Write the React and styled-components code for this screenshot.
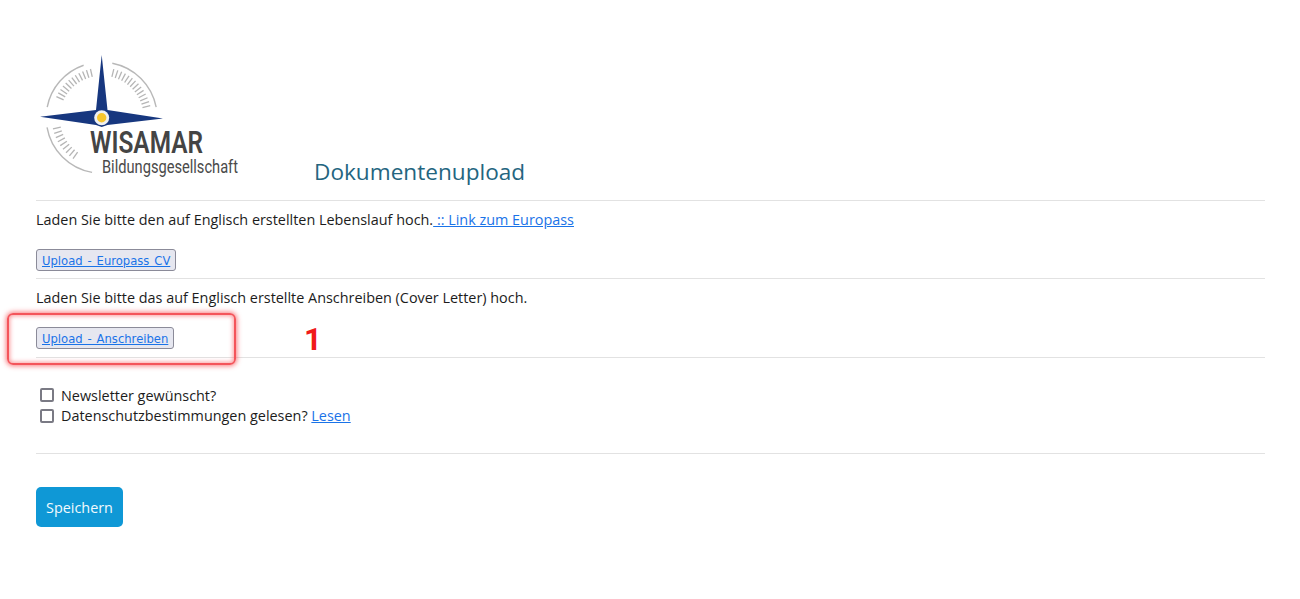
import React from "react";
import styled, { createGlobalStyle } from "styled-components";

const Global = createGlobalStyle`
  html, body { margin: 0; padding: 0; background: #fff; }
  body { font-family: "Open Sans", sans-serif; font-size: 14.4px; color: #1c1c1c; }
`;

const Page = styled.main`
  position: relative;
  box-sizing: border-box;
  width: 1300px;
  height: 599px;
  padding: 45px 35px 0 36px;
  overflow: hidden;
`;

const Header = styled.header`
  display: flex;
  align-items: flex-end;
  height: 155px;
  border-bottom: 1px solid #e2e2e2;
`;

const Heading = styled.h1`
  margin: 0 0 13px 64px;
  font-size: 22.6px;
  line-height: 30px;
  font-weight: 400;
  color: #24657f;
`;

const Section = styled.section`
  height: 78px;
  padding-top: 9px;
  box-sizing: border-box;
  border-bottom: 1px solid #e2e2e2;
  & + & { height: 79px; }
`;

const Line = styled.p`
  margin: 0;
  line-height: 20px;
`;

const TextLink = styled.a`
  color: #1a73e8;
  text-decoration: underline;
`;

const UploadButton = styled.button`
  display: block;
  margin-top: 19px;
  height: 22px;
  padding: 2px 5px 0;
  box-sizing: border-box;
  font-family: "DejaVu Sans", sans-serif;
  font-size: 11.6px;
  word-spacing: 1.2px;
  line-height: 18px;
  background: #e6e7f0;
  border: 1px solid #8b8b99;
  border-radius: 3px;
`;

const Consents = styled.div`
  height: 96px;
  box-sizing: border-box;
  padding: 27px 0 0 4px;
  border-bottom: 1px solid #e2e2e2;
`;

const Consent = styled.label`
  display: flex;
  align-items: center;
  gap: 7px;
  height: 20.5px;
`;

const Box = styled.span`
  width: 14px;
  height: 14px;
  box-sizing: border-box;
  border: 2px solid #7a7a84;
  border-radius: 2px;
  background: #fff;
`;

const SaveButton = styled.button`
  display: block;
  margin-top: 33px;
  width: 87px;
  height: 40px;
  padding: 0;
  font-family: "Open Sans", sans-serif;
  font-size: 14.4px;
  color: #f2fafd;
  background: #0f98d6;
  border: none;
  border-radius: 5px;
`;

const Highlight = styled.div`
  position: absolute;
  left: 7px;
  top: 313px;
  width: 229px;
  height: 52px;
  box-sizing: border-box;
  border: 2px solid #f4555b;
  border-radius: 6px;
  box-shadow: 0 0 5px 1px rgba(248, 90, 95, 0.8), inset 0 0 4px 1px rgba(248, 90, 95, 0.6);
  pointer-events: none;
`;

const Marker = styled.span`
  position: absolute;
  left: 304px;
  top: 322px;
  font-family: Roboto, sans-serif;
  font-size: 31px;
  line-height: 36px;
  font-weight: 700;
  color: #f01a1a;
`;

const LogoSvg = styled.svg`
  display: block;
  flex: none;
  align-self: flex-start;
`;

const CX = 65.7;
const CY = 72.7;

function polar(r, deg) {
  const a = (deg * Math.PI) / 180;
  return [CX + r * Math.cos(a), CY + r * Math.sin(a)];
}

function arcPath(r, from, to) {
  const [x1, y1] = polar(r, from);
  const [x2, y2] = polar(r, to);
  return `M${x1} ${y1}A${r} ${r} 0 0 1 ${x2} ${y2}`;
}

function ticks(from, to, count) {
  const out = [];
  const step = (to - from) / (count - 1);
  for (let i = 0; i < count; i += 1) {
    const d = from + i * step;
    const [x1, y1] = polar(42, d);
    const [x2, y2] = polar(50, d);
    out.push(<line key={i} x1={x1} y1={y1} x2={x2} y2={y2} />);
  }
  return out;
}

function Logo() {
  return (
    <LogoSvg width="214" height="154" viewBox="0 0 214 154">
      <g fill="none" stroke="#b8b8b8" strokeWidth="1.4">
        <path d={arcPath(55.5, 191, 251)} />
        <path d={arcPath(55.5, 281, 349)} />
        <path d={arcPath(55.5, 100, 170)} />
      </g>
      <g stroke="#b5b5b5" strokeWidth="1.3">
        {ticks(205, 257, 12)}
        {ticks(284, 346, 14)}
        {ticks(125, 167, 9)}
      </g>
      <path
        d="M65.7 10L71.5 65L127 73.5L71.5 80L65.7 82L60 80L4 71.7L60 65Z"
        fill="#17377f"
      />
      <circle cx={CX} cy={CY} r="7.5" fill="#eef0f2" />
      <circle cx={CX} cy={CY} r="4.7" fill="#f7c62d" />
      <text
        x="54"
        y="108"
        fontFamily="Roboto, sans-serif"
        fontWeight="600"
        fontSize="31"
        fill="#444"
        textLength="113"
        lengthAdjust="spacingAndGlyphs"
      >
        WISAMAR
      </text>
      <text
        x="66"
        y="128"
        fontFamily="Roboto, sans-serif"
        fontSize="18"
        fill="#4a4a4a"
        textLength="136"
        lengthAdjust="spacingAndGlyphs"
      >
        Bildungsgesellschaft
      </text>
    </LogoSvg>
  );
}

export default function App() {
  return (
    <>
      <Global />
      <Page>
        <Header>
          <Logo />
          <Heading>Dokumentenupload</Heading>
        </Header>
        <Section>
          <Line>
            Laden Sie bitte den auf Englisch erstellten Lebenslauf hoch.
            <TextLink href="#"> :: Link zum Europass</TextLink>
          </Line>
          <UploadButton type="button">
            <TextLink href="#">Upload - Europass CV</TextLink>
          </UploadButton>
        </Section>
        <Section>
          <Line>Laden Sie bitte das auf Englisch erstellte Anschreiben (Cover Letter) hoch.</Line>
          <UploadButton type="button">
            <TextLink href="#">Upload - Anschreiben</TextLink>
          </UploadButton>
        </Section>
        <Consents>
          <Consent>
            <Box />
            <span>Newsletter gewünscht?</span>
          </Consent>
          <Consent>
            <Box />
            <span>
              Datenschutzbestimmungen gelesen? <TextLink href="#">Lesen</TextLink>
            </span>
          </Consent>
        </Consents>
        <SaveButton type="button">Speichern</SaveButton>
        <Highlight />
        <Marker>1</Marker>
      </Page>
    </>
  );
}
